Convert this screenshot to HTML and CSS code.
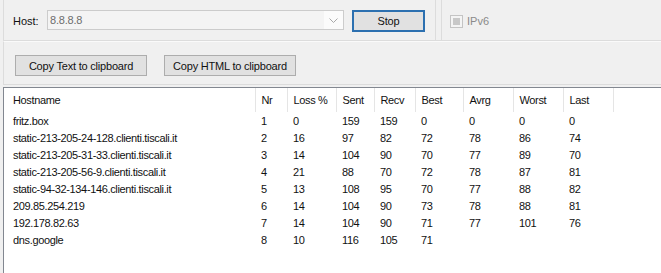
FILE: index.html
```html
<!DOCTYPE html>
<html>
<head>
<meta charset="utf-8">
<link rel="stylesheet" href="styles.css">
</head>
<body>
<div class="app">
  <div class="top">
    <div class="host-group">
      <span class="host-label">Host:</span>
      <div class="combo">
        <span class="combo-text">8.8.8.8</span>
        <span class="combo-arrow"><svg width="9" height="5" viewBox="0 0 9 5"><path d="M0.5 0.5 L4.5 4.5 L8.5 0.5" fill="none" stroke="#a8a8a8" stroke-width="1"/></svg></span>
      </div>
      <button class="btn stop">Stop</button>
    </div>
    <div class="opt-group">
      <span class="check"><span class="check-fill"></span></span>
      <span class="opt-label">IPv6</span>
    </div>
  </div>
  <div class="toolbar">
    <button class="btn copy">Copy Text to clipboard</button>
    <button class="btn copy">Copy HTML to clipboard</button>
  </div>
  <div class="list">
    <table class="grid">
      <colgroup>
        <col class="c-host"><col class="c-nr"><col class="c-loss"><col class="c-sent"><col class="c-recv"><col class="c-best"><col class="c-avrg"><col class="c-worst"><col class="c-last"><col class="c-rest">
      </colgroup>
      <thead>
        <tr><th>Hostname</th><th>Nr</th><th>Loss %</th><th>Sent</th><th>Recv</th><th>Best</th><th>Avrg</th><th>Worst</th><th>Last</th><th class="empty"></th></tr>
      </thead>
      <tbody>
        <tr><td>fritz.box</td><td>1</td><td>0</td><td>159</td><td>159</td><td>0</td><td>0</td><td>0</td><td>0</td><td></td></tr>
        <tr><td>static-213-205-24-128.clienti.tiscali.it</td><td>2</td><td>16</td><td>97</td><td>82</td><td>72</td><td>78</td><td>86</td><td>74</td><td></td></tr>
        <tr><td>static-213-205-31-33.clienti.tiscali.it</td><td>3</td><td>14</td><td>104</td><td>90</td><td>70</td><td>77</td><td>89</td><td>70</td><td></td></tr>
        <tr><td>static-213-205-56-9.clienti.tiscali.it</td><td>4</td><td>21</td><td>88</td><td>70</td><td>72</td><td>78</td><td>87</td><td>81</td><td></td></tr>
        <tr><td>static-94-32-134-146.clienti.tiscali.it</td><td>5</td><td>13</td><td>108</td><td>95</td><td>70</td><td>77</td><td>88</td><td>82</td><td></td></tr>
        <tr><td>209.85.254.219</td><td>6</td><td>14</td><td>104</td><td>90</td><td>73</td><td>78</td><td>88</td><td>81</td><td></td></tr>
        <tr><td>192.178.82.63</td><td>7</td><td>14</td><td>104</td><td>90</td><td>71</td><td>77</td><td>101</td><td>76</td><td></td></tr>
        <tr><td>dns.google</td><td>8</td><td>10</td><td>116</td><td>105</td><td>71</td><td></td><td></td><td></td><td></td></tr>
      </tbody>
    </table>
  </div>
</div>
</body>
</html>
```
FILE: styles.css
```css
* { box-sizing: border-box; }
html, body { margin: 0; padding: 0; }
body {
  width: 661px;
  height: 273px;
  overflow: hidden;
  background: #f0f0f0;
  font-family: "Liberation Sans", Arial, sans-serif;
  font-size: 11px;
  color: #111;
}
.app {
  height: 273px;
  padding-left: 3px;
  display: flex;
  flex-direction: column;
}
.top {
  height: 41px;
  display: flex;
  border-left: 1px solid #dcdcdc;
  border-bottom: 1px solid #dcdcdc;
}
.host-group {
  width: 432px;
  display: flex;
  align-items: flex-start;
  padding-top: 10px;
  border-right: 1px solid #dcdcdc;
}
.host-label {
  margin-left: 9px;
  margin-top: 5px;
  width: 34px;
}
.combo {
  width: 297px;
  height: 20px;
  border: 1px solid #cccccc;
  background: #f4f4f4;
  display: flex;
  justify-content: space-between;
}
.combo-text {
  color: #6d6d6d;
  padding: 3px 0 0 2px;
  letter-spacing: -0.2px;
}
.combo-arrow {
  width: 19px;
  background: #fbfbfb;
  display: flex;
  align-items: center;
  justify-content: center;
}
.btn {
  font: inherit;
  color: #111;
  background: #e1e1e1;
  border: 1px solid #adadad;
  padding: 0;
  margin: 0;
  letter-spacing: -0.2px;
}
.stop {
  margin-left: 8px;
  width: 73px;
  height: 22px;
  border: 2px solid #2c70b0;
}
.opt-group {
  flex: 1;
  margin-left: 5px;
  border-left: 1px solid #dcdcdc;
  display: flex;
  align-items: flex-start;
  padding: 15px 0 0 8px;
}
.check {
  width: 13px;
  height: 13px;
  border: 1px solid #c4c4c4;
  background: #f4f4f4;
  display: flex;
  align-items: center;
  justify-content: center;
}
.check-fill {
  width: 7px;
  height: 7px;
  background: #c8c8c8;
}
.opt-label {
  color: #8a8a8a;
  margin-left: 4px;
  margin-top: 0px;
}
.toolbar {
  height: 44px;
  display: flex;
  gap: 17px;
  align-items: flex-start;
  padding: 13px 0 0 11px;
  border-left: 1px solid #dcdcdc;
  border-bottom: 1px solid #dcdcdc;
  border-top: 1px solid #fafafa;
}
.copy {
  width: 132px;
  height: 21px;
}
.list {
  flex: 1;
  margin-top: 2px;
  background: #fff;
  border-top: 1px solid #828790;
  border-left: 1px solid #828790;
  overflow: hidden;
}
.grid {
  border-collapse: collapse;
  table-layout: fixed;
  width: 657px;
  letter-spacing: -0.35px;
}
.c-host { width: 251px; }
.c-nr { width: 32px; }
.c-loss { width: 49px; }
.c-sent { width: 38px; }
.c-recv { width: 41px; }
.c-best { width: 48px; }
.c-avrg { width: 50px; }
.c-worst { width: 50px; }
.c-last { width: 50px; }
.c-rest { width: 48px; }
.grid th {
  height: 24px;
  font-weight: normal;
  text-align: left;
  padding: 0 0 0 6px;
  border-right: 1px solid #e5e5e5;
  white-space: nowrap;
  overflow: hidden;
}
.grid th.empty { border-right: none; }
.grid td {
  height: 17px;
  padding: 1px 0 0 6px;
  white-space: nowrap;
  overflow: hidden;
}
.grid th:first-child, .grid td:first-child { padding-left: 9px; }
```
